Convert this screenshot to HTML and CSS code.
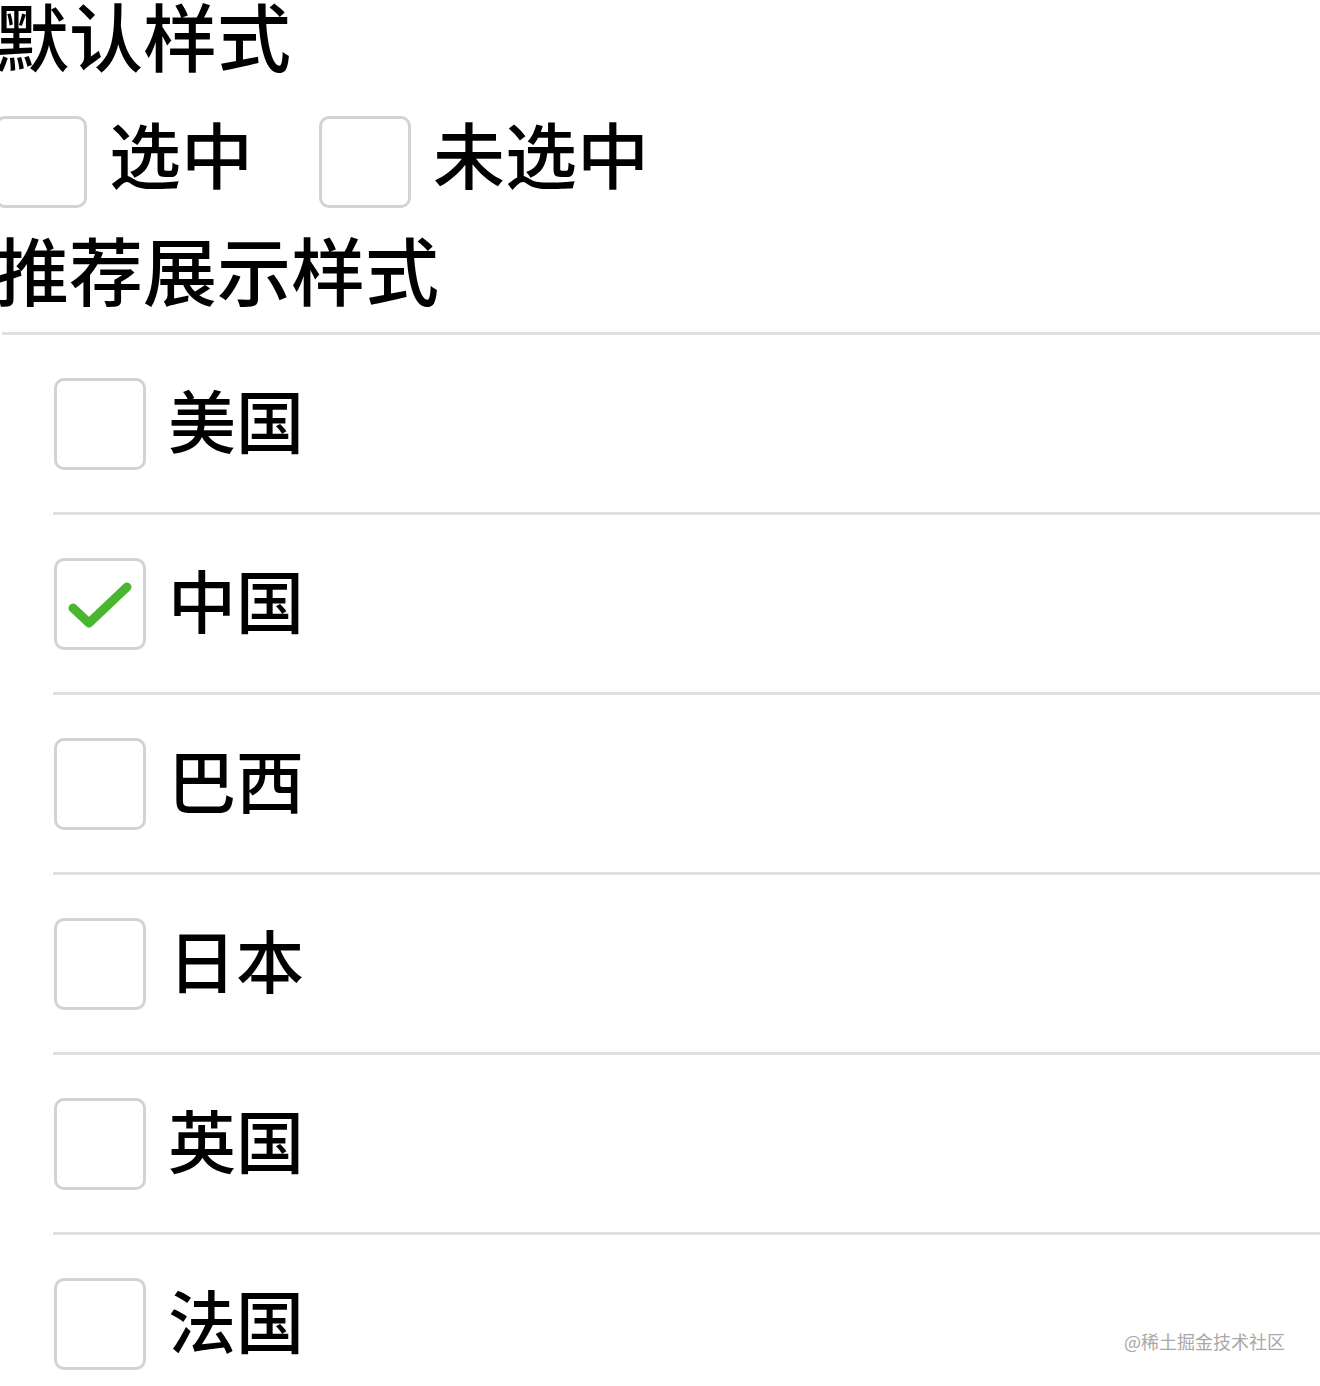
FILE: index.html
```html
<!DOCTYPE html>
<html lang="zh-CN">
<head>
<meta charset="utf-8">
<title>checkbox</title>
<link rel="stylesheet" href="styles.css">
</head>
<body>
<div class="page">
  <div class="top">
    <h1 class="title">默认样式</h1>
    <div class="demo">
      <label class="opt">
        <span class="box"></span>
        <span class="opt-text">选中</span>
      </label>
      <label class="opt">
        <span class="box"></span>
        <span class="opt-text">未选中</span>
      </label>
    </div>
    <h1 class="title title-2">推荐展示样式</h1>
  </div>
  <ul class="list">
    <li class="item"><span class="box"></span><span class="name">美国</span></li>
    <li class="item"><span class="box checked"><svg class="tick" viewBox="0 0 86 86" width="86" height="86"><path d="M16 47 L32 62 L70 26" fill="none" stroke="#4ab52f" stroke-width="9" stroke-linecap="round" stroke-linejoin="round"/></svg></span><span class="name">中国</span></li>
    <li class="item"><span class="box"></span><span class="name">巴西</span></li>
    <li class="item"><span class="box"></span><span class="name">日本</span></li>
    <li class="item"><span class="box"></span><span class="name">英国</span></li>
    <li class="item"><span class="box"></span><span class="name">法国</span></li>
  </ul>
  <div class="watermark">@稀土掘金技术社区</div>
</div>
</body>
</html>
```
FILE: styles.css
```css
html, body {
  margin: 0;
  padding: 0;
  overflow: hidden;
  background: #ffffff;
}

body {
  font-family: "Noto Sans CJK SC", "Noto Sans", sans-serif;
  color: #000000;
}

.page {
  position: relative;
  width: 1320px;
  height: 1386px;
  overflow: hidden;
}

.top {
  margin-left: -5px;
}

.title {
  margin: 0;
  font-size: 74px;
  font-weight: 500;
  line-height: 68px;
}

.title-2 {
  margin-top: 26px;
}

.demo {
  display: flex;
  margin-top: 48px;
  gap: 66px;
}

.opt {
  display: flex;
  align-items: flex-start;
  gap: 22px;
}

.opt-text {
  font-size: 72px;
  font-weight: 500;
  line-height: 72px;
}

.box {
  display: block;
  flex: none;
  width: 92px;
  height: 92px;
  box-sizing: border-box;
  border: 3px solid #d3d3d3;
  border-radius: 10px;
  background: #ffffff;
}

.tick {
  display: block;
}

.list {
  list-style: none;
  margin: 30px 0 0 2px;
  padding: 0;
  border-top: 3px solid #e0e0e0;
}

.item {
  display: flex;
  align-items: center;
  gap: 22px;
  height: 177px;
  margin-left: 51px;
  padding-left: 1px;
  border-bottom: 3px solid #e0e0e0;
}

.item:last-child {
  border-bottom: none;
}

.name {
  font-size: 68px;
  font-weight: 500;
  line-height: 72px;
  padding-bottom: 10px;
}

.watermark {
  position: absolute;
  left: 1124px;
  top: 1328px;
  font-size: 18px;
  line-height: 26px;
  color: #a8a8a8;
  letter-spacing: 0;
}
```
